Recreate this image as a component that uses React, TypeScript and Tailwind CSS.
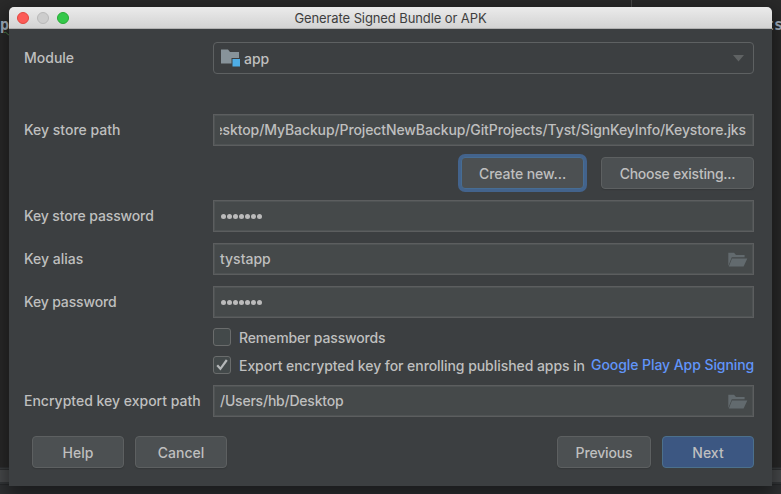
import type { ReactNode } from "react";

function Row({ label, tracking, className, children }: { label?: string; tracking?: string; className: string; children: ReactNode }) {
  return (
    <div className={`flex items-center ${className}`}>
      <div className={`w-[189px] shrink-0 whitespace-nowrap ${tracking ?? ""}`}>{label}</div>
      {children}
    </div>
  );
}

function Field({ children, browse }: { children: ReactNode; browse?: boolean }) {
  return (
    <div className="flex h-8 w-[541px] items-center border border-[#5c5e5f] bg-[#45494a] pr-[7px] pl-[6px] shadow-[inset_0_0_0_1px_#4f5354]">
      {children}
      {browse && (
        <svg className="mt-px ml-auto -mr-[2px] shrink-0" width="20" height="16" viewBox="0 0 20 16" fill="#626a6e">
          <path d="M0.3 14V0.8H6L8 3H16.6V5.3H3.8Z" />
          <path d="M4 6.4H19.3L15.6 14.6H0.8Z" />
        </svg>
      )}
    </div>
  );
}

function Dots() {
  return (
    <span className="mt-px flex gap-[1px] pl-[1px]" aria-label="password">
      {[0, 1, 2, 3, 4, 5, 6].map((i) => (
        <span key={i} className="size-[5px] rounded-full bg-[#bbbbbb]" />
      ))}
    </span>
  );
}

function Button({ children, className }: { children: ReactNode; className: string }) {
  return (
    <button className={`flex h-8 shrink-0 items-center justify-center whitespace-nowrap rounded-[4px] border pt-px ${className}`}>
      {children}
    </button>
  );
}

const plain = "border-[#5d6061] bg-[#4c5052] shadow-[0_1px_1px_#35383a]";

function Check({ checked }: { checked?: boolean }) {
  return (
    <span className="mr-2 flex size-[18px] shrink-0 items-center justify-center rounded-[3px] border border-[#6a6c6c] bg-[#43494a]">
      {checked && (
        <svg className="shrink-0" width="14" height="14" viewBox="0 0 14 14" fill="none" stroke="#b4b7b8" strokeWidth="2.2">
          <path d="M2.2 7.2L5.4 10.8L11.8 2" />
        </svg>
      )}
    </span>
  );
}

export default function App() {
  return (
    <div className="relative h-[494px] w-[781px] overflow-hidden bg-[#2a2a2a] font-['Inter','Liberation_Sans',sans-serif] text-[14px] leading-[18px] font-[450] text-[#bfbfbf]">
      <div className="flex h-full flex-col">
        <div className="flex h-[467px] font-['DejaVu_Sans_Mono',monospace] text-[15px] font-bold text-[#a9b7c6]">
          <span className="mt-[16px] h-[18px] w-[631px] underline decoration-[#4f8a4f] decoration-wavy decoration-1">pr</span>
          <span className="h-[467px] w-px bg-[#4a4a4a]" />
          <span className="mt-[16px] ml-auto -mr-[2px]">ts</span>
        </div>
        <div className="h-[3px] border-y border-[#303234] bg-[#3c3f41]" />
        <div className="h-[12px] bg-[#4a4c4e]" />
        <div className="h-[3px] border-b border-[#282a2c] bg-[#35383a]" />
        <div className="flex-1 bg-[#303234]" />
      </div>

      <div className="absolute top-[7px] left-[9px] flex h-[479px] w-[763px] flex-col rounded-t-[5px] bg-[#3c3f41] shadow-[0_8px_20px_4px_rgba(0,0,0,0.45)]">
        <div className="flex h-[22px] shrink-0 items-center rounded-t-[5px] border-b border-[#b1b1b1] bg-linear-to-b from-[#ebebeb] to-[#d3d3d3]">
          <div className="flex w-[100px] gap-2 pl-2">
            <span className="size-3 rounded-full border border-[#e2463f] bg-[#fc5b57]" />
            <span className="size-3 rounded-full border border-[#b9b9b9] bg-[#cdcdcd]" />
            <span className="size-3 rounded-full border border-[#27aa35] bg-[#34c84a]" />
          </div>
          <div className="mr-[100px] flex-1 text-center text-[13px] font-normal tracking-[-0.1px] whitespace-nowrap text-[#3e3e3e]">Generate Signed Bundle or APK</div>
        </div>

        <div className="flex flex-1 flex-col pt-[13px] pl-[15px]">
          <Row label="Module" className="h-8">
            <div className="flex h-8 w-[541px] items-center rounded-[4px] border border-[#5e6162] pr-[9px] pl-[7px]">
              <svg width="20" height="18" viewBox="0 0 20 18">
                <path d="M0 0.5H7L9 3H18V9H10.5V14.5H0Z" fill="#87939a" />
                <rect x="11.5" y="10" width="7.5" height="7.5" fill="#4eade5" />
              </svg>
              <span className="mt-px ml-[3px]">app</span>
              <svg className="mt-px ml-auto" width="11" height="7" viewBox="0 0 11 7" fill="#5f6263">
                <path d="M0 0H11L5.5 6.5Z" />
              </svg>
            </div>
          </Row>
          <Row label="Key store path" className="mt-10 h-8">
            <Field>
              <div className="flex flex-1 justify-end overflow-hidden tracking-[-0.11px] whitespace-nowrap">/Users/hb/Desktop/MyBackup/ProjectNewBackup/GitProjects/Tyst/SignKeyInfo/Keystore.jks</div>
            </Field>
          </Row>
          <div className="mt-[11px] flex pl-[437px]">
            <Button className="w-[123px] border-[#466d94] bg-[#4c5052] tracking-[-0.07px] shadow-[0_0_0_3px_#43638c]">Create new...</Button>
            <Button className={`ml-[17px] w-[153px] tracking-[-0.24px] ${plain}`}>Choose existing...</Button>
          </div>
          <Row label="Key store password" tracking="tracking-[-0.13px]" className="mt-[11px] h-8">
            <Field><Dots /></Field>
          </Row>
          <Row label="Key alias" className="mt-[11px] h-8">
            <Field browse>tystapp</Field>
          </Row>
          <Row label="Key password" tracking="tracking-[-0.15px]" className="mt-[11px] h-8">
            <Field><Dots /></Field>
          </Row>
          <Row className="mt-[10px] h-[18px]">
            <Check />
            <span className="mt-[2px] tracking-[-0.15px] whitespace-nowrap">Remember passwords</span>
          </Row>
          <Row className="mt-[10px] h-[18px]">
            <Check checked />
            <span className="mt-[2px] w-[352px] tracking-[-0.06px] whitespace-nowrap">Export encrypted key for enrolling published apps in</span>
            <a className="tracking-[-0.07px] whitespace-nowrap text-[#6195fa]">Google Play App Signing</a>
          </Row>
          <Row label="Encrypted key export path" className="mt-[11px] h-8">
            <Field browse><span className="tracking-[-0.22px]">/Users/hb/Desktop</span></Field>
          </Row>
          <div className="mt-[19px] flex pl-2">
            <Button className={`w-[92px] ${plain}`}>Help</Button>
            <Button className={`ml-[11px] w-[92px] ${plain}`}>Cancel</Button>
            <Button className={`ml-[330px] w-[94px] tracking-[-0.15px] ${plain}`}>Previous</Button>
            <Button className="ml-[11px] w-[92px] border-[#4c708c] bg-[#3c5782]">Next</Button>
          </div>
        </div>
      </div>
    </div>
  );
}
